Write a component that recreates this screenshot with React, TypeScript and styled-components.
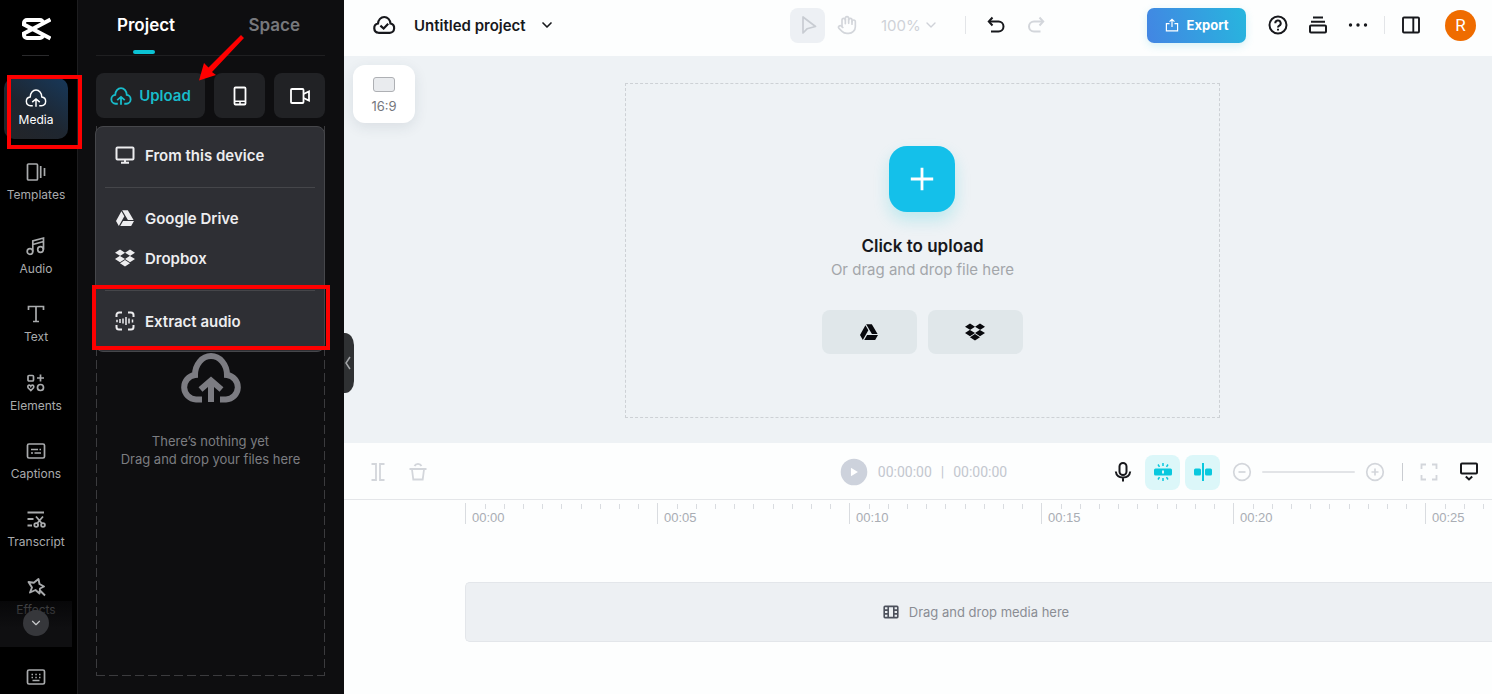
import React from "react";
import styled, { createGlobalStyle, css } from "styled-components";
import { FaDropbox, FaGoogleDrive } from "react-icons/fa";
import { ChevronDown, Hand } from "lucide-react";

const GlobalStyle = createGlobalStyle`
  *, *::before, *::after { box-sizing: border-box; }
  body { margin: 0; background: #000; font-family: Inter, "Liberation Sans", sans-serif; }
  button, input, select { font: inherit; color: inherit; margin: 0; }
  button { padding: 0; border: 0; background: none; cursor: pointer; }
  h1, h2, p, ul { margin: 0; padding: 0; }
  ul { list-style: none; }
`;

const Shell = styled.div`
  position: relative;
  display: flex;
  height: 100vh;
  min-height: 690px;
  overflow: hidden;
`;

/* ---------- icons ---------- */

const Glyph = styled.svg.attrs({ fill: "none", stroke: "currentColor", "aria-hidden": true })`
  display: block;
  flex: none;
`;

type IconProps = { size?: number; weight?: number };

const CloudUpload = ({ size = 22, weight = 5 }: IconProps) => (
  <Glyph width={size} height={Math.round((size * 5) / 6)} viewBox="0 0 60 50" strokeWidth={weight}>
    <path d="M21 46.500H15A12.300 12.300 0 0 1 14 22A16 19 0 0 1 46 22A12.300 12.300 0 0 1 45 46.500H39" />
    <path d="M30 49V29M19.500 36.500L30 27.500L40.500 36.500" />
  </Glyph>
);

const Logo = () => (
  <Glyph width={30} height={24} viewBox="0 0 30 24" strokeWidth={4}>
    <path d="M29.500 2.500L3 16.500V18a3 3 0 0 0 3 3h13a3 3 0 0 0 3-3v-1" />
    <path d="M29.500 21.500L3 7.500V6a3 3 0 0 1 3-3h13a3 3 0 0 1 3 3v1" />
  </Glyph>
);

const Draw = ({ size = 20, weight = 1.7, children }: IconProps & { children: React.ReactNode }) => (
  <Glyph width={size} height={size} viewBox="0 0 20 20" strokeWidth={weight}>{children}</Glyph>
);

const TemplatesIcon = () => (
  <Draw><rect x="1.500" y="2" width="10" height="16" rx="1" /><path d="M14.700 4v12M18.500 6v8" /></Draw>
);
const AudioIcon = () => (
  <Draw><circle cx="4" cy="15.500" r="2.800" /><circle cx="14.500" cy="13.500" r="2.800" /><path d="M6.800 15.500V5L17.500 2v11.500M6.800 8.500L17.500 5.500" /></Draw>
);
const TextIcon = () => (
  <Draw><path d="M2.500 6V2.500h15V6M10 2.500V17.500M7 17.500h6" /></Draw>
);
const ElementsIcon = () => (
  <Draw>
    <rect x="2" y="2.500" width="5.500" height="5.500" rx="1" /><path d="M14.500 1.500v7M11 5h7" />
    <circle cx="14.500" cy="14.500" r="3" />
    <path d="M4.800 17.500L2.300 15c-1.600-2.500 1.500-4 2.500-1.800 1-2.200 4.100-.7 2.500 1.800z" />
  </Draw>
);
const CaptionsIcon = () => (
  <Draw><rect x="1.500" y="3" width="17" height="14" rx="1.500" /><path d="M5 8.500h7M13.500 8.500H15M5 12h2M8.500 12H15" /></Draw>
);
const TranscriptIcon = () => (
  <Draw weight={1.8}>
    <path d="M1.500 3.500h16.500M1.500 10h6M1.500 16.500h4.500M10 7.500l6 7M17 7.500l-6 7" />
    <circle cx="10.200" cy="16" r="1.900" /><circle cx="17" cy="16" r="1.900" />
  </Draw>
);
const EffectsIcon = () => (
  <Draw weight={1.9}><path d="M12.500 2l1 5 4.500 2.500-4 2-.5 5-4-3.500-5.500 2.500L6 10.500 2.500 5l5.300.800zM13.500 13l5.500 5.500" strokeLinejoin="round" /></Draw>
);
const KeyboardIcon = () => (
  <Draw>
    <rect x="1.500" y="3" width="17" height="14" rx="1.500" />
    <path d="M5.500 7.500H7M9.300 7.500h1.500M13 7.500h1.500M5.500 10.500H7M9.300 10.500h1.500M13 10.500h1.500M6.500 13.500h7" />
  </Draw>
);
const PhoneIcon = () => (
  <Draw weight={1.8}><rect x="4.500" y="1.500" width="11" height="17" rx="1" /><path d="M4.500 15.200h11M9 17h2" strokeWidth={1.500} /></Draw>
);
const VideoIcon = () => (
  <Draw weight={1.8}><rect x="1" y="3" width="12.500" height="14" rx="1" /><path d="M13.500 8l5.500-2.500v9L13.500 12" /></Draw>
);
const MonitorIcon = () => (
  <Draw weight={2}><rect x="1.500" y="2.500" width="17" height="12" rx="1" /><path d="M10 14.500V17M6 17.700h8" /></Draw>
);
const ExtractIcon = () => (
  <Draw weight={2}>
    <path d="M1.500 6V4a2.500 2.500 0 0 1 2.500-2.500h3M13 1.500h3A2.500 2.500 0 0 1 18.500 4v2M18.500 14v2a2.500 2.500 0 0 1-2.500 2.500h-3M7 18.500H4A2.500 2.500 0 0 1 1.500 16v-2" />
    <path d="M2 8.800v2.400M5 8v4M8 7.500v5M11 6v8M14 7.500v5M17.500 8.500v3" strokeWidth={1.500} />
  </Draw>
);
const CloudCheck = () => (
  <Draw size={24} weight={1.8}>
    <path d="M5.400 16.500h9.400a3.900 3.900 0 0 0 .6-7.700C15.200 5.700 13 3.300 10.200 3.300S5.200 5.700 5 8.800a3.900 3.900 0 0 0 .4 7.700z" />
    <path d="M7 10.500l2.700 2.500 3.800-4" />
  </Draw>
);
const PointerIcon = () => (
  <Draw><path d="M5 2v16l4-4.200 8.500-2.300z" strokeLinejoin="round" /></Draw>
);
const UndoIcon = () => (
  <Draw weight={2}><path d="M4 6.500h8.500a4.800 4.800 0 0 1 0 10H5" /><path d="M6.500 2.500L2.800 6.500 6.500 10.500" /></Draw>
);
const RedoIcon = () => (
  <Draw weight={2}><path d="M16 6.500H8a4.800 4.800 0 0 0 0 10h6.500" /><path d="M13.500 2.500l3.700 4-3.700 4" /></Draw>
);
const ExportIcon = () => (
  <Draw size={14}><path d="M6.500 8H2v10.500h16V8h-4.500M10 13V2M6.500 5.200L10 1.800l3.500 3.400" /></Draw>
);
const HelpIcon = () => (
  <Draw weight={2}><circle cx="10" cy="10" r="8.500" /><path d="M7.300 8.300a2.700 2.700 0 1 1 4 2.300c-.9.600-1.300 1-1.300 1.900M10 13.700v1.800" /></Draw>
);
const StackIcon = () => (
  <Draw weight={2}><rect x="2" y="10.500" width="16" height="7" rx="1" /><path d="M3 6.700h14M5 2.500h10" /></Draw>
);
const DotsIcon = () => (
  <Draw><g fill="currentColor" stroke="none"><circle cx="2.500" cy="10" r="1.700" /><circle cx="10" cy="10" r="1.700" /><circle cx="17.500" cy="10" r="1.700" /></g></Draw>
);
const SidebarIcon = () => (
  <Draw weight={1.9}><rect x="2" y="2.500" width="16" height="15" rx="1" /><path d="M12.300 2.500v15" /></Draw>
);
const SplitIcon = () => (
  <Draw weight={1.800}><path d="M3.500 2H8v16H3.500M16.500 2H12v16h4.500" /></Draw>
);
const TrashIcon = () => (
  <Draw weight={1.800}><path d="M1.500 7h17M4 7.500l1.300 10h9.400L16 7.500M6.500 4c.7-1.500 2-2.200 3.500-2.200s2.800.7 3.500 2.200" /></Draw>
);
const PlayIcon = () => (
  <Draw size={28}><circle cx="10" cy="10" r="9.500" fill="currentColor" stroke="none" /><path d="M7.800 7v6l5-3z" fill="#fff" stroke="none" /></Draw>
);
const MicIcon = () => (
  <Draw weight={2}><rect x="6.500" y="1" width="7" height="12" rx="3.500" /><path d="M2.800 9.500c.5 4 3.300 6 7.200 6s6.700-2 7.200-6M10 15.500v4" /></Draw>
);
const MagnetIcon = () => (
  <Draw><rect x="1" y="6.500" width="18" height="7" rx="1.500" fill="currentColor" stroke="none" /><path d="M10 8.500v3" stroke="#fff" /><path d="M10 1v3M5 2.500l1.500 2.300M15 2.500l-1.500 2.300M10 16v3M5 17.500l1.500-2.300M15 17.500l-1.500-2.300" strokeWidth={1.500} /></Draw>
);
const SnapIcon = () => (
  <Draw><path d="M10 1v18" strokeWidth={2} /><rect x="1" y="6.500" width="7" height="7" rx="1.500" fill="currentColor" stroke="none" /><rect x="12" y="6.500" width="7" height="7" rx="1.500" fill="currentColor" stroke="none" /></Draw>
);
const ZoomMark = ({ plus }: { plus?: boolean }) => (
  <Draw><circle cx="10" cy="10" r="8.300" /><path d={plus ? "M6.500 10h7M10 6.500v7" : "M6.500 10h7"} /></Draw>
);
const FitIcon = () => (
  <Draw weight={1.8}><path d="M2.500 7V2.500H7M13 2.500h4.500V7M17.500 13v4.500H13M7 17.500H2.500V13" /></Draw>
);
const PreviewIcon = () => (
  <Draw weight={2}><rect x="2" y="1.500" width="16" height="10" rx="1" /><path d="M6.800 14.500l3.200 3 3.200-3" /></Draw>
);
const FilmIcon = () => (
  <Draw size={16} weight={2}><rect x="1.500" y="3" width="17" height="14" rx="1" /><path d="M6.500 3v14M13.500 3v14M1.500 7.700h5M1.500 12.300h5M13.500 7.700h5M13.500 12.300h5" /></Draw>
);

/* ---------- side rail ---------- */

const Rail = styled.nav`
  display: flex;
  flex-direction: column;
  flex: none;
  width: 78px;
  padding-right: 5px;
  background: #000;
  border-right: 1px solid #1d1d1f;
  color: #a9abad;
`;

const RailBrand = styled.div`
  display: flex;
  justify-content: center;
  height: 56px;
  margin: 0 23px 0 22px;
  padding-top: 17px;
  border-bottom: 1px solid #2a2a2c;
  color: #fff;
`;

const RailList = styled.ul`
  position: relative;
  display: flex;
  flex: 1;
  flex-direction: column;
  justify-content: space-between;
  padding: 22px 4px 19px;
`;

const RailItem = styled.li<{ $spaced?: boolean }>`
  margin-bottom: ${(p) => (p.$spaced ? "6px" : "0")};
`;

const RailButton = styled.button<{ $active?: boolean }>`
  display: flex;
  flex-direction: column;
  align-items: center;
  justify-content: center;
  gap: 5px;
  width: 64px;
  height: 61px;
  border-radius: 10px;
  font-size: 12px;
  line-height: 16px;
  ${(p) => p.$active && css`
    color: #fff;
    background: linear-gradient(215deg, #17385a 0%, #1e2630 55%, #242528 100%);
  `}
`;

const RailFade = styled.li`
  position: absolute;
  inset: auto 0 0 0;
  display: flex;
  justify-content: center;
  height: 46px;
  padding-top: 9px;
  background: linear-gradient(rgba(12, 12, 14, 0.6), #0f0f11 60%);
`;

const RailMore = styled.button`
  display: grid;
  place-items: center;
  width: 26px;
  height: 26px;
  border-radius: 50%;
  background: #36373b;
  color: #c9cacc;
`;

const RailFoot = styled.div`
  display: flex;
  align-items: flex-start;
  justify-content: center;
  height: 47px;
  padding-top: 20px;
`;

const RailFootButton = styled.button`
  color: #a9abad;
`;

/* ---------- media panel ---------- */

const Panel = styled.aside`
  position: relative;
  z-index: 1;
  display: flex;
  flex: none;
  flex-direction: column;
  width: 266px;
  padding: 0 19px 18px 18px;
  background: #0e0e10;
`;

const Tabs = styled.div`
  display: flex;
  justify-content: space-between;
  height: 56px;
  padding: 0 25px 0 21px;
  border-bottom: 1px solid #1f1f21;
`;

const Tab = styled.button<{ $active?: boolean }>`
  position: relative;
  height: 50px;
  font-size: 17px;
  font-weight: 600;
  color: ${(p) => (p.$active ? "#fff" : "#77787c")};
  ${(p) => p.$active && css`
    &::after {
      content: "";
      position: absolute;
      left: calc(50% - 13px);
      bottom: -4px;
      width: 22px;
      height: 4px;
      border-radius: 2px;
      background: #0bc2d4;
    }
  `}
`;

const Sources = styled.div`
  display: grid;
  grid-template-columns: 1fr 51px 51px;
  gap: 9px;
  margin-top: 17px;
`;

const SourceButton = styled.button<{ $accent?: boolean }>`
  display: flex;
  align-items: center;
  justify-content: center;
  gap: 7px;
  height: 45px;
  border-radius: 8px;
  background: #212225;
  color: ${(p) => (p.$accent ? "#18bccb" : "#fff")};
  font-size: 15px;
  font-weight: 600;
`;

const dashes = "#3b3b3e 0 9px, transparent 9px 13px";
const DropZone = styled.div`
  position: relative;
  display: flex;
  flex: 1;
  flex-direction: column;
  align-items: center;
  justify-content: center;
  gap: 29px;
  margin-top: 8px;
  padding-top: 18px;
  color: #7c7c82;
  background:
    repeating-linear-gradient(${dashes}) left / 1px 100% no-repeat,
    repeating-linear-gradient(${dashes}) right / 1px 100% no-repeat,
    repeating-linear-gradient(90deg, ${dashes}) bottom / 100% 1px no-repeat;
`;

const EmptyText = styled.p`
  text-align: center;
  font-size: 13px;
  line-height: 18px;
  color: #7c7d81;
`;

const Menu = styled.div`
  position: absolute;
  inset: 0 0 auto -1px;
  padding: 8px 9px 10px;
  border: 1px solid #46474b;
  border-radius: 8px;
  background: #2e2f34;
`;

const MenuItem = styled.button`
  display: flex;
  align-items: center;
  gap: 10px;
  width: 100%;
  height: 40px;
  padding-left: 10px;
  color: #ededef;
  font-size: 15px;
  font-weight: 600;
`;

const MenuIcon = styled.span`
  display: grid;
  place-items: center;
  width: 20px;
  height: 20px;
`;

const MenuRule = styled.hr`
  height: 1px;
  margin: 12px 0 10px;
  border: 0;
  background: #45464a;
`;

const Collapse = styled.button`
  position: absolute;
  top: calc(50% - 14px);
  right: -10px;
  display: grid;
  align-items: center;
  width: 10px;
  height: 60px;
  color: #a4a6a9;
  background: #2f3133;
  border-radius: 0 9px 9px 0 / 0 12px 12px 0;
`;

/* ---------- editor ---------- */

const Editor = styled.main`
  display: flex;
  flex: 1;
  flex-direction: column;
  min-width: 0;
  background: #fdfefe;
  color: #17181c;
`;

const Bar = styled.header`
  display: grid;
  grid-template-columns: 1fr auto 1fr;
  align-items: center;
  height: 56px;
  padding: 0 16px 6px;
`;

const Group = styled.div<{ $gap: number; $end?: boolean; $inset?: number }>`
  display: flex;
  align-items: center;
  justify-content: ${(p) => (p.$end ? "flex-end" : "flex-start")};
  gap: ${(p) => p.$gap}px;
  padding-left: ${(p) => p.$inset ?? 0}px;
`;

const IconButton = styled.button<{ $muted?: boolean }>`
  display: grid;
  place-items: center;
  min-width: 20px;
  min-height: 24px;
  color: ${(p) => (p.$muted ? "#d3d6db" : "#17181c")};
`;

const PlayButton = styled(IconButton)`
  color: #cdd2dc;
`;

const ToggleButton = styled.button<{ $tint?: boolean }>`
  display: grid;
  place-items: center;
  width: 35px;
  height: 35px;
  border-radius: 8px;
  background: ${(p) => (p.$tint ? "#dcf7f9" : "#edf0f4")};
  color: ${(p) => (p.$tint ? "#09c8de" : "#c8ccd2")};
`;

const Divider = styled.span<{ $strong?: boolean }>`
  width: 1px;
  height: 18px;
  background: ${(p) => (p.$strong ? "#c9ccd1" : "#e3e5e8")};
`;

const TitleButton = styled.button`
  display: flex;
  align-items: center;
  gap: 13px;
  font-size: 15px;
  font-weight: 600;
`;

const ZoomField = styled.label`
  position: relative;
  display: flex;
  align-items: center;
  margin: 0 14px 0 12px;
  color: #cfd2d8;
  svg { position: absolute; right: 0; pointer-events: none; }
`;

const ZoomSelect = styled.select`
  appearance: none;
  width: 58px;
  height: 24px;
  padding: 0;
  border: 0;
  background: none;
  font-size: 15px;
  color: #cfd2d8;
`;

const ExportButton = styled.button`
  display: flex;
  align-items: center;
  justify-content: center;
  gap: 8px;
  width: 99px;
  height: 35px;
  margin-right: 2px;
  border-radius: 7px;
  background: linear-gradient(75deg, #4385e3, #27b6de);
  box-shadow: 0 3px 8px rgba(60, 190, 210, 0.2);
  color: #fff;
  font-size: 13px;
  font-weight: 700;
`;

const Avatar = styled.button`
  width: 31px;
  height: 31px;
  margin-left: 4px;
  border-radius: 50%;
  background: #ef6c00;
  color: #fff;
  font-family: Roboto, sans-serif;
  font-size: 17px;
`;

const Canvas = styled.section`
  position: relative;
  display: flex;
  flex: 1;
  justify-content: center;
  min-height: 0;
  padding: 27px 0 25px 9px;
  background: #eef2f5;
`;

const RatioButton = styled.button`
  position: absolute;
  top: 9px;
  left: 9px;
  display: flex;
  flex-direction: column;
  align-items: center;
  justify-content: center;
  gap: 6px;
  width: 62px;
  height: 58px;
  padding-top: 2px;
  border-radius: 12px;
  background: #fff;
  box-shadow: 0 4px 14px rgba(40, 60, 80, 0.1);
  color: #75777d;
  font-size: 13px;
  line-height: 16px;
`;

const RatioShape = styled.span`
  width: 22px;
  height: 15px;
  border: 1px solid #aeb0b4;
  border-radius: 3px;
  background: #e9ebee;
`;

const Stage = styled.div`
  display: flex;
  flex-direction: column;
  align-items: center;
  justify-content: center;
  height: 100%;
  aspect-ratio: 16 / 9;
  padding-bottom: 2px;
  border: 1px dashed #cdd1d5;
`;

const AddButton = styled.button`
  display: grid;
  place-items: center;
  width: 66px;
  height: 66px;
  margin-bottom: 22px;
  border-radius: 18px;
  background: #14c0ea;
  box-shadow: 0 8px 16px rgba(20, 200, 215, 0.22);
  color: #fff;
`;

const StageTitle = styled.h2`
  font-size: 17px;
  font-weight: 600;
  line-height: 24px;
`;

const StageHint = styled.p`
  margin-bottom: 28px;
  color: #a3a6aa;
  font-size: 15px;
  line-height: 24px;
`;

const CloudButton = styled.button`
  display: grid;
  place-items: center;
  width: 95px;
  height: 44px;
  border-radius: 8px;
  background: #e0e7ea;
  color: #08090d;
`;

const Timeline = styled.section`
  flex: none;
  height: 251px;
  overflow: hidden;
`;

const TimelineBar = styled.div`
  display: grid;
  grid-template-columns: 1fr auto 1fr;
  align-items: center;
  height: 57px;
  padding: 2px 13px 0 24px;
  border-bottom: 1px solid #e4e6e9;
`;

const Clock = styled.div`
  display: flex;
  gap: 9px;
  color: #c3c7cf;
  font-family: Roboto, sans-serif;
  font-size: 14px;
  line-height: 20px;
`;

const ZoomRange = styled.input`
  appearance: none;
  width: 93px;
  height: 2px;
  border-radius: 1px;
  background: #e2e4e7;
  &::-webkit-slider-thumb { appearance: none; width: 1px; height: 2px; }
`;

const Ruler = styled.div`
  display: flex;
  margin-left: 121px;
  padding-top: 3px;
  overflow: hidden;
`;

const RulerSpan = styled.div`
  flex: none;
  width: 192px;
  height: 21px;
  border-left: 1px solid #d9dce0;
`;

const Ticks = styled.div`
  display: flex;
  height: 7px;
  i { flex: 1; height: 5px; margin-top: 1px; border-left: 1px solid #d9dce0; }
  i:first-child { border-color: transparent; }
`;

const RulerLabel = styled.span`
  display: block;
  padding-left: 6px;
  color: #a9adb4;
  font-family: "Liberation Sans", sans-serif;
  font-size: 13px;
  line-height: 16px;
`;

const Track = styled.div`
  display: flex;
  align-items: center;
  justify-content: center;
  gap: 10px;
  height: 60px;
  margin: 58px 0 0 121px;
  padding-right: 6px;
  border: solid #e3e6ea;
  border-width: 1px 0 1px 1px;
  border-radius: 5px 0 0 5px;
  background: #edf0f3;
  color: #8a8d93;
  font-size: 13px;
  svg { color: #4d515c; }
`;

/* ---------- annotations ---------- */

const Highlight = styled.div<{ $box: [number, number, number, number] }>`
  position: absolute;
  z-index: 2;
  left: ${(p) => p.$box[0]}px;
  top: ${(p) => p.$box[1]}px;
  width: ${(p) => p.$box[2]}px;
  height: ${(p) => p.$box[3]}px;
  border: 4px solid #fe0000;
  pointer-events: none;
`;

const Arrow = styled.svg`
  position: absolute;
  z-index: 2;
  left: 196px;
  top: 32px;
  pointer-events: none;
`;

const railItems = [
  { label: "Media", icon: <CloudUpload size={22} weight={4} /> },
  { label: "Templates", icon: <TemplatesIcon /> },
  { label: "Audio", icon: <AudioIcon /> },
  { label: "Text", icon: <TextIcon /> },
  { label: "Elements", icon: <ElementsIcon /> },
  { label: "Captions", icon: <CaptionsIcon /> },
  { label: "Transcript", icon: <TranscriptIcon /> },
  { label: "Effects", icon: <EffectsIcon /> },
];

const times = ["00:00", "00:05", "00:10", "00:15", "00:20", "00:25"];

export default function App() {
  return (
    <Shell>
      <GlobalStyle />
      <Rail aria-label="Tools">
        <RailBrand><Logo /></RailBrand>
        <RailList>
          {railItems.map((item, i) => (
            <RailItem key={item.label} $spaced={i < 2}>
              <RailButton $active={i === 0}>{item.icon}{item.label}</RailButton>
            </RailItem>
          ))}
          <RailFade>
            <RailMore aria-label="More tools"><ChevronDown size={14} /></RailMore>
          </RailFade>
        </RailList>
        <RailFoot><RailFootButton aria-label="Shortcuts"><KeyboardIcon /></RailFootButton></RailFoot>
      </Rail>

      <Panel>
        <Tabs role="tablist">
          <Tab role="tab" aria-selected="true" $active>Project</Tab>
          <Tab role="tab" aria-selected="false">Space</Tab>
        </Tabs>
        <Sources>
          <SourceButton $accent><CloudUpload size={22} />Upload</SourceButton>
          <SourceButton aria-label="Upload from phone"><PhoneIcon /></SourceButton>
          <SourceButton aria-label="Record"><VideoIcon /></SourceButton>
        </Sources>
        <DropZone>
          <CloudUpload size={60} weight={6} />
          <EmptyText>There’s nothing yet<br />Drag and drop your files here</EmptyText>
          <Menu>
            <MenuItem><MenuIcon><MonitorIcon /></MenuIcon>From this device</MenuItem>
            <MenuRule />
            <MenuItem><MenuIcon><FaGoogleDrive size={18} /></MenuIcon>Google Drive</MenuItem>
            <MenuItem><MenuIcon><FaDropbox size={20} /></MenuIcon>Dropbox</MenuItem>
            <MenuRule />
            <MenuItem><MenuIcon><ExtractIcon /></MenuIcon>Extract audio</MenuItem>
          </Menu>
        </DropZone>
        <Collapse aria-label="Collapse panel">
          <Glyph width={8} height={16} viewBox="0 0 8 16" strokeWidth={1.5}><path d="M6 2L2 8l4 6" /></Glyph>
        </Collapse>
      </Panel>

      <Editor>
        <Bar>
          <Group $gap={18} $inset={12}>
            <IconButton aria-label="Saved to cloud"><CloudCheck /></IconButton>
            <TitleButton>Untitled project<ChevronDown size={16} strokeWidth={2.5} /></TitleButton>
          </Group>
          <Group $gap={12}>
            <ToggleButton aria-label="Select"><PointerIcon /></ToggleButton>
            <IconButton $muted aria-label="Pan"><Hand size={20} /></IconButton>
            <ZoomField>
              <ZoomSelect aria-label="Zoom" defaultValue="100%"><option>100%</option></ZoomSelect>
              <ChevronDown size={16} />
            </ZoomField>
            <Divider />
            <Group $gap={20} $inset={8}>
              <IconButton aria-label="Undo"><UndoIcon /></IconButton>
              <IconButton $muted aria-label="Redo"><RedoIcon /></IconButton>
            </Group>
          </Group>
          <Group $gap={20} $end>
            <ExportButton><ExportIcon />Export</ExportButton>
            <IconButton aria-label="Help"><HelpIcon /></IconButton>
            <IconButton aria-label="Layers"><StackIcon /></IconButton>
            <Group $gap={16}>
              <IconButton aria-label="More"><DotsIcon /></IconButton>
              <Divider />
              <IconButton aria-label="Toggle sidebar"><SidebarIcon /></IconButton>
            </Group>
            <Avatar aria-label="Account">R</Avatar>
          </Group>
        </Bar>

        <Canvas>
          <Stage>
            <AddButton aria-label="Add media">
              <Draw size={28} weight={2}><path d="M10 2v16M2 10h16" /></Draw>
            </AddButton>
            <StageTitle>Click to upload</StageTitle>
            <StageHint>Or drag and drop file here</StageHint>
            <Group $gap={11}>
              <CloudButton aria-label="Google Drive"><FaGoogleDrive size={18} /></CloudButton>
              <CloudButton aria-label="Dropbox"><FaDropbox size={20} /></CloudButton>
            </Group>
          </Stage>
          <RatioButton><RatioShape />16:9</RatioButton>
        </Canvas>

        <Timeline>
          <TimelineBar>
            <Group $gap={20}>
              <IconButton $muted aria-label="Split"><SplitIcon /></IconButton>
              <IconButton $muted aria-label="Delete"><TrashIcon /></IconButton>
            </Group>
            <Group $gap={10}>
              <PlayButton aria-label="Play"><PlayIcon /></PlayButton>
              <Clock><span>00:00:00</span><span>|</span><span>00:00:00</span></Clock>
            </Group>
            <Group $gap={12} $end>
              <IconButton aria-label="Record voice"><MicIcon /></IconButton>
              <Group $gap={5}>
                <ToggleButton $tint aria-label="Magnet"><MagnetIcon /></ToggleButton>
                <ToggleButton $tint aria-label="Snap"><SnapIcon /></ToggleButton>
              </Group>
              <Group $gap={10}>
                <IconButton $muted aria-label="Zoom out"><ZoomMark /></IconButton>
                <ZoomRange type="range" aria-label="Timeline zoom" />
                <IconButton $muted aria-label="Zoom in"><ZoomMark plus /></IconButton>
              </Group>
              <Group $gap={16} $inset={5}>
                <Divider $strong />
                <Group $gap={20}>
                  <IconButton $muted aria-label="Fit"><FitIcon /></IconButton>
                  <IconButton aria-label="Preview"><PreviewIcon /></IconButton>
                </Group>
              </Group>
            </Group>
          </TimelineBar>
          <Ruler>
            {times.map((t) => (
              <RulerSpan key={t}>
                <Ticks>{Array.from({ length: 10 }, (_, i) => <i key={i} />)}</Ticks>
                <RulerLabel>{t}</RulerLabel>
              </RulerSpan>
            ))}
          </Ruler>
          <Track><FilmIcon />Drag and drop media here</Track>
        </Timeline>
      </Editor>

      <Highlight $box={[7, 75, 75, 74]} />
      <Highlight $box={[92, 285, 238, 65]} />
      <Arrow width="52" height="52" viewBox="0 0 52 52" fill="#fe0000">
        <path d="M45 3l3 3-32 34 4 3L3 48.500 8 31l4.500 4.500z" />
      </Arrow>
    </Shell>
  );
}
